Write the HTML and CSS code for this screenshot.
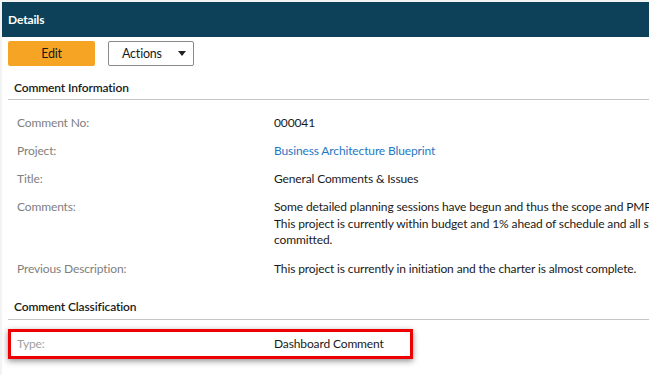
FILE: index.html
```html
<!DOCTYPE html>
<html lang="en">
<head>
    <meta charset="UTF-8">
    <title>Comment Details</title>
    <link rel="stylesheet" href="styles.css">
</head>
<body>
    <div class="page">
        <div class="panel-header">Details</div>
        <div class="toolbar">
            <button class="btn btn-edit">Edit</button>
            <button class="btn btn-actions"><span>Actions</span><span class="caret"></span></button>
        </div>

        <div class="section-title">Comment Information</div>
        <div class="fields">
            <div class="field">
                <span class="field-label">Comment No:</span>
                <span class="field-value">000041</span>
            </div>
            <div class="field">
                <span class="field-label">Project:</span>
                <a href="#" class="field-value link">Business Architecture Blueprint</a>
            </div>
            <div class="field">
                <span class="field-label">Title:</span>
                <span class="field-value">General Comments &amp; Issues</span>
            </div>
            <div class="field">
                <span class="field-label">Comments:</span>
                <span class="field-value multiline">Some detailed planning sessions have begun and thus the scope and PMP are being finalized.<br>This project is currently within budget and 1% ahead of schedule and all staff resources are<br>committed.</span>
            </div>
            <div class="field">
                <span class="field-label">Previous Description:</span>
                <span class="field-value">This project is currently in initiation and the charter is almost complete.</span>
            </div>
        </div>

        <div class="section-title second">Comment Classification</div>
        <div class="fields">
            <div class="field highlight">
                <span class="field-label light">Type:</span>
                <span class="field-value">Dashboard Comment</span>
            </div>
        </div>
    </div>
</body>
</html>
```

FILE: styles.css
```css
body {
    margin: 0;
    background: #f3f3f3;
    font-family: 'Lato', 'Noto Sans', sans-serif;
    font-size: 12px;
    letter-spacing: -0.13px;
    color: #1a1a1a;
    overflow: hidden;
}
.page {
    margin: 2px 0 0 2px;
    width: 900px;
    min-height: 373px;
    background: #fff;
}
.panel-header {
    height: 35px;
    line-height: 35px;
    padding-left: 6px;
    background: #0c4159;
    color: #fff;
    font-weight: bold;
}
.toolbar {
    display: flex;
    gap: 13px;
    padding: 4px 6px 0;
}
.btn {
    height: 25px;
    font-family: inherit;
    font-size: 12.5px;
    letter-spacing: -0.2px;
    color: #1a1a1a;
    border-radius: 2px;
    cursor: pointer;
}
.btn-edit {
    width: 87px;
    background: #f6a423;
    border: none;
}
.btn-actions {
    display: flex;
    align-items: center;
    width: 86px;
    background: #fff;
    border: 1px solid #8a8a8a;
    padding: 0 0 0 13px;
}
.caret {
    margin-left: 16px;
    border-left: 4px solid transparent;
    border-right: 4px solid transparent;
    border-top: 5px solid #222;
}
.section-title {
    margin-left: 6px;
    padding: 14px 0 3px 6px;
    line-height: 16px;
    font-weight: 600;
    border-bottom: 1px solid #c4c4c4;
}
.section-title.second {
    padding-top: 16px;
    padding-bottom: 4px;
}
.fields {
    margin-left: 6px;
    padding-top: 9px;
}
.field {
    display: flex;
    padding: 6px 0 6px 9px;
    line-height: 16px;
}
.field-label {
    width: 257px;
    flex-shrink: 0;
    color: #808080;
}
.field-label.light {
    color: #a0a0a0;
}
.field-value {
    white-space: nowrap;
}
.multiline {
    line-height: 16.7px;
}
.link {
    color: #1f78c4;
    text-decoration: none;
}
.highlight {
    width: 393px;
    margin-top: 0;
    padding: 4px 0 4px 6px;
    border: 3px solid #ee0000;
    box-shadow: 0 2px 6px rgba(0, 0, 0, 0.45);
}
```
